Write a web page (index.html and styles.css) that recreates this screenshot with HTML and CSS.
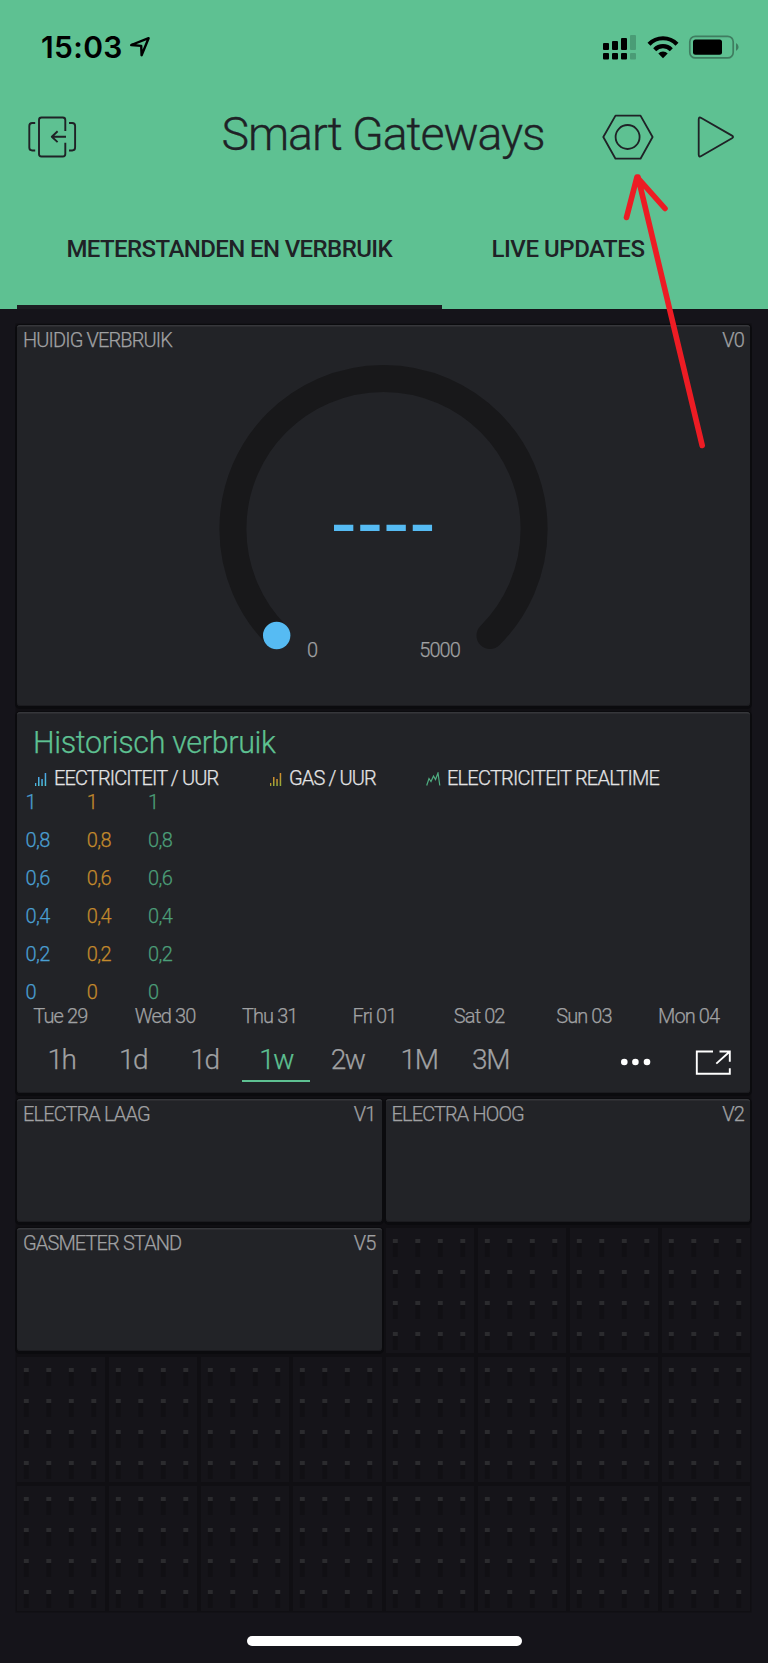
FILE: index.html
```html
<!DOCTYPE html>
<html lang="nl">
<head>
<meta charset="utf-8">
<title>Smart Gateways</title>
<link rel="stylesheet" href="styles.css">
</head>
<body>
<svg class="defs" aria-hidden="true">
  <defs>
    <linearGradient id="gas" x1="0" y1="0" x2="0" y2="1"><stop offset="0" stop-color="#d98a2b"/><stop offset="1" stop-color="#8fae3a"/></linearGradient>
    <linearGradient id="elec" x1="0" y1="0" x2="0" y2="1"><stop offset="0" stop-color="#4aa3e8"/><stop offset="1" stop-color="#4cc3d6"/></linearGradient>
  </defs>
</svg>
<main class="screen">
  <header class="header">
    <div class="status">
      <div class="status-left">
        <span class="clock">15:03</span>
        <svg class="location" width="22" height="22" viewBox="0 0 22 22"><path d="M19.6 2.2 12.6 19.2 12.2 9.9 2.2 9Z" fill="none" stroke="#000" stroke-width="2.4" stroke-linejoin="round"/></svg>
      </div>
      <svg width="138" height="26" viewBox="602 34 138 26">
        <g fill="#000">
          <rect x="603" y="43" width="6" height="7" rx="1"/><rect x="612" y="41" width="6" height="9" rx="1"/><rect x="621" y="38" width="6" height="12" rx="1"/>
          <rect x="603" y="53" width="6" height="6.5" rx="1"/><rect x="612" y="53" width="6" height="6.5" rx="1"/><rect x="621" y="53" width="6" height="6.5" rx="1"/>
        </g>
        <g fill="#4a9c76"><rect x="630" y="35" width="6" height="15" rx="1"/><rect x="630" y="53" width="6" height="6.5" rx="1"/></g>
        <g fill="none" stroke="#000" stroke-width="4.2"><path d="M649 44.2a19.5 19.5 0 0 1 28 0"/><path d="M654.7 49.7a11.6 11.6 0 0 1 16.6 0"/></g>
        <path d="M658.3 53.6a6.4 6.4 0 0 1 9.4 0L663 58.3Z" fill="#000"/>
        <rect x="689.8" y="36.3" width="43.4" height="21.6" rx="5.5" fill="none" stroke="#3f7d60" stroke-width="1.7"/>
        <rect x="693" y="39.5" width="29" height="15.3" rx="2.5" fill="#000"/>
        <path d="M736 43v8q2.6-1.3 2.6-4t-2.6-4Z" fill="#3f7d60"/>
      </svg>
    </div>
    <nav class="nav">
      <svg width="50" height="44" viewBox="27 115 50 44" fill="none" stroke="#1f2226" stroke-width="1.9" stroke-linejoin="round">
        <path d="M65.3 131v-11q0-2.5-2.5-2.5H41.5q-2.5 0-2.5 2.500v34q0 2.500 2.500 2.500h21.300q2.500 0 2.500-2.500v-11.200"/>
        <path d="M66 136.700H52M57.600 131.300l-5.800 5.400 5.800 5.400"/>
        <path d="M35.200 123h-3q-2.900 0-2.900 2.900v21.700q0 2.900 2.900 2.900h3M69 123h3.200q2.900 0 2.900 2.900v21.700q0 2.900-2.900 2.900H69"/>
      </svg>
      <h1 class="title">Smart Gateways</h1>
      <svg class="nav-right" width="134" height="46" viewBox="602 114 134 46" fill="none" stroke="#1f2226" stroke-width="1.8" stroke-linejoin="round">
        <path d="M603.300 137l12.200-21.400h25l12.100 21.400-12.100 21.700h-25Z"/><circle cx="627.600" cy="137" r="12"/>
        <path d="M698.700 119.500q0-3 2.600-1.500L732 135.600q2.200 1.300 0 2.600L701.300 156q-2.600 1.500-2.600-1.500Z"/>
      </svg>
    </nav>
    <div class="tabs">
      <div class="tab active">METERSTANDEN EN VERBRUIK</div>
      <div class="tab">LIVE UPDATES</div>
    </div>
  </header>

  <section class="board">
    <article class="card gauge-card">
      <div class="label"><span>HUIDIG VERBRUIK</span><span>V0</span></div>
      <div class="gauge">
        <svg width="330" height="300" viewBox="-165 -165 330 300">
          <path d="M-106.500 106.500A150.600 150.600 0 1 1 106.500 106.500" fill="none" stroke="#18181a" stroke-width="27" stroke-linecap="round"/>
          <circle cx="-106.800" cy="106.500" r="13.700" fill="#56bbf3"/>
        </svg>
        <div class="gauge-value">----</div>
        <div class="gauge-range"><span>0</span><span>5000</span></div>
      </div>
    </article>

    <article class="card chart-card">
      <h2 class="chart-title">Historisch verbruik</h2>
      <div class="legend">
        <span class="key key-elec"><svg width="12" height="13" viewBox="0 0 12 13" fill="url(#elec)"><rect x="0" y="10" width="1.300" height="3"/><rect x="3" y="4" width="1.500" height="9"/><rect x="6.300" y="6" width="1.500" height="7"/><rect x="9.700" y="0" width="1.500" height="13"/></svg>EECTRICITEIT / UUR</span>
        <span class="key key-gas"><svg width="12" height="13" viewBox="0 0 12 13" fill="url(#gas)"><rect x="0" y="10" width="1.300" height="3"/><rect x="3" y="4" width="1.500" height="9"/><rect x="6.300" y="6" width="1.500" height="7"/><rect x="9.700" y="0" width="1.500" height="13"/></svg>GAS / UUR</span>
        <span class="key key-live"><svg width="15" height="14" viewBox="0 0 15 14" fill="none" stroke="#4fae81" stroke-width="1.200"><path d="M.700 13.500 3 6.500 5 9.500 7.500 4 9.500 7.500 12 1 13.800 13.500"/></svg>ELECTRICITEIT REALTIME</span>
      </div>
      <div class="axis">
        <div class="scale blue"><span>1</span><span>0,8</span><span>0,6</span><span>0,4</span><span>0,2</span><span>0</span></div>
        <div class="scale orange"><span>1</span><span>0,8</span><span>0,6</span><span>0,4</span><span>0,2</span><span>0</span></div>
        <div class="scale green"><span>1</span><span>0,8</span><span>0,6</span><span>0,4</span><span>0,2</span><span>0</span></div>
      </div>
      <div class="dates"><span>Tue 29</span><span>Wed 30</span><span>Thu 31</span><span>Fri 01</span><span>Sat 02</span><span>Sun 03</span><span>Mon 04</span></div>
      <div class="ranges">
        <span>1h</span><span>1d</span><span>1d</span><span class="on">1w</span><span>2w</span><span>1M</span><span>3M</span>
        <svg class="tools" width="112" height="26" viewBox="620 1049 112 26">
          <g fill="#fff"><circle cx="624.300" cy="1062" r="3.300"/><circle cx="635.400" cy="1062" r="3.300"/><circle cx="647" cy="1062" r="3.300"/></g>
          <path d="M713 1051.500h-16.200v22.200h33v-5.500M719.500 1051.500h10.300v10.200M729.500 1051.800l-13.200 11.800" fill="none" stroke="#fff" stroke-width="1.900"/>
        </svg>
      </div>
    </article>

    <article class="card half"><div class="label"><span>ELECTRA LAAG</span><span>V1</span></div></article>
    <article class="card half"><div class="label"><span>ELECTRA HOOG</span><span>V2</span></div></article>
    <article class="card half"><div class="label"><span>GASMETER STAND</span><span>V5</span></div></article>
    <div class="cell"></div><div class="cell"></div><div class="cell"></div><div class="cell"></div>
    <div class="cell"></div><div class="cell"></div><div class="cell"></div><div class="cell"></div>
    <div class="cell"></div><div class="cell"></div><div class="cell"></div><div class="cell"></div>
    <div class="cell"></div><div class="cell"></div><div class="cell"></div><div class="cell"></div>
    <div class="cell"></div><div class="cell"></div><div class="cell"></div><div class="cell"></div>
  </section>
  <div class="home-bar"></div>

  <svg class="pointer" width="88" height="282" viewBox="622 170 88 282" fill="none" stroke="#ed1c24" stroke-width="5.600" stroke-linecap="round" stroke-linejoin="round">
    <path d="M626.500 217.500 637 177l28 31.500M638 177 702.200 445.500"/>
  </svg>
</main>
</body>
</html>
```
FILE: styles.css
```css
* { box-sizing: border-box; }
body {
  margin: 0;
  background: #15141a;
  font-family: Roboto, "Liberation Sans", sans-serif;
  font-weight: 300;
}
.defs { position: absolute; width: 0; height: 0; }
.screen { position: relative; width: 768px; height: 1663px; overflow: hidden; }

.header { height: 309px; background: #5ec192; color: #1f2226; }
.status { height: 94px; padding: 0 28px 0 41px; display: flex; align-items: center; justify-content: space-between; }
.status-left { display: flex; align-items: center; gap: 6.5px; }
.clock { font: 600 30px/30px Inter, sans-serif; letter-spacing: 0.35px; color: #000; }
.nav { height: 86px; padding: 0 32px 0 27px; display: grid; grid-template-columns: 1fr auto 1fr; align-items: center; }
.title { margin: 0; padding-bottom: 7px; font-size: 46.5px; line-height: 56px; font-weight: 300; letter-spacing: -1.05px; transform: translateX(1.5px); -webkit-text-stroke: 0.3px currentColor; }
.nav-right { justify-self: end; }
.tabs { height: 129px; padding-left: 16.5px; display: flex; }
.tab { padding: 12px 49.5px 0; border-bottom: 4px solid transparent; font-size: 24px; font-weight: 500; line-height: 115px; letter-spacing: -0.45px; white-space: nowrap; }
.active { width: 425.5px; padding: 12px 0 0; text-align: center; letter-spacing: -0.6px; border-color: #1c1d22; }

.board {
  margin: 16px 18px 0 17px;
  display: grid;
  grid-template-columns: repeat(8, 1fr);
  grid-auto-rows: 125px;
  gap: 4px;
  background: #100f13;
  box-shadow: 0 0 0 1.5px #100f13;
}
.card {
  margin-bottom: 2px;
  border-radius: 3px;
  background: #222327;
  box-shadow: 0 1px 0 2px #0b0b0e, inset 0 2px 0 -0.5px #36373b, inset 0 -1px 0 #1b1b1f;
  color: #a0a1a3;
  font-size: 20px;
  -webkit-text-stroke: 0.25px currentColor;
}
.gauge-card, .chart-card { grid-column: span 8; grid-row: span 3; }
.half { grid-column: span 4; }
.label { height: 30px; padding: 0 6px 0 6px; display: flex; justify-content: space-between; line-height: 30px; letter-spacing: -0.88px; }

.gauge { width: 330px; height: 300px; margin: 9px auto 0; display: grid; transform: translateX(-0.5px); }
.gauge > * { grid-area: 1 / 1; }
.gauge-value { font: 79px/79px "Liberation Sans", sans-serif; color: #56bbf3; text-align: center; margin-top: 118px; -webkit-text-stroke: 0; }
.gauge-range { align-self: end; height: 28px; line-height: 28px; padding: 0 88px 0 89px; display: flex; justify-content: space-between; letter-spacing: -0.9px; }

.chart-title { margin: 0; padding-left: 16px; height: 59px; line-height: 61px; font-size: 30.5px; font-weight: 300; letter-spacing: -0.35px; color: #5ec192; }
.legend { height: 15px; padding-left: 18px; display: flex; line-height: 15px; color: #e4e4e5; letter-spacing: -0.88px; }
.key { display: flex; align-items: flex-end; gap: 7px; white-space: nowrap; }
.key-elec { width: 235px; }
.key-gas { width: 156px; }
.key-live { gap: 6px; letter-spacing: -0.78px; }
.axis { margin-top: 6px; padding-left: 8.5px; display: grid; grid-template-columns: repeat(3, 61.3px); }
.scale { display: grid; grid-auto-rows: 20px; row-gap: 18px; line-height: 20px; letter-spacing: -0.6px; }
.blue { color: #4a9fd2; }
.orange { color: #c48a2c; }
.green { color: #4c9f79; }
.dates { margin: 4px 9px 0 -9px; display: grid; grid-template-columns: repeat(7, 1fr); line-height: 20px; text-align: center; letter-spacing: -0.9px; }
.ranges { margin-top: 10px; padding: 0 18px 0 10.5px; height: 46px; display: flex; gap: 3.5px; font-size: 28px; letter-spacing: -1.5px; }
.ranges span { width: 68px; height: 46px; line-height: 47px; text-align: center; }
.ranges .on { color: #5ec192; border-bottom: 2px solid #5ec192; }
.tools { margin: 13px 0 0 auto; }

.cell {
  background:
    linear-gradient(90deg, #151419 7px, transparent 7px 12px, #151419 12px) 0 0 / 22.5px 31px,
    linear-gradient(#151419 11px, #2b2b2e 11px 15px, #111014 15px 29px, #151419 29px) 0 0 / 22.5px 31px;
}
.home-bar { width: 275px; height: 10.5px; margin: 24.5px auto 0; border-radius: 6px; background: #fff; }
.pointer { position: absolute; left: 622px; top: 170px; }
```
